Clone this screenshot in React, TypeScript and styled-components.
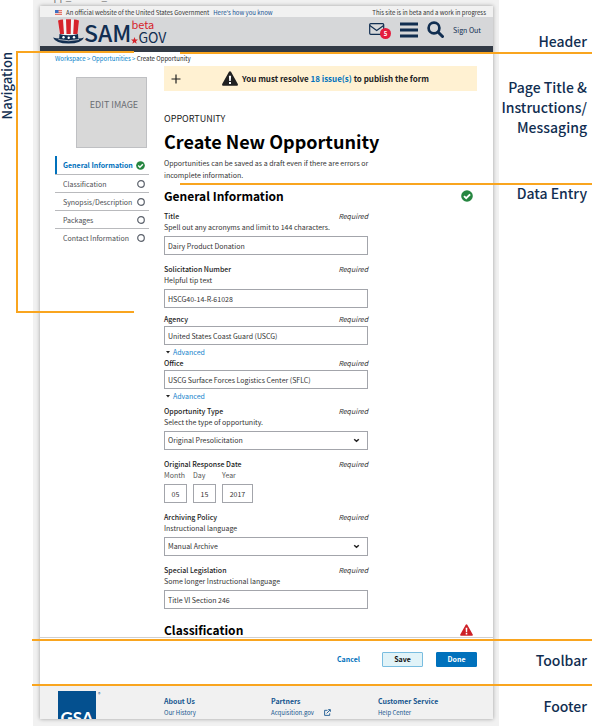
import React, { useId } from 'react';
import styled, { createGlobalStyle } from 'styled-components';

const NAVY = '#112e51';
const BLUE = '#0071bc';
const ORANGE = '#f9a51f';

const GlobalStyle = createGlobalStyle`
  *, *::before, *::after { box-sizing: border-box; }
  body { margin: 0; background: #fff; }
  body, button, input, select {
    font-family: "Noto Sans CJK SC", "Noto Sans", sans-serif;
  }
  h1, h2, h3, p, ul { margin: 0; padding: 0; }
  ul { list-style: none; }
  a { color: inherit; text-decoration: none; }
`;

/* Board with callouts */
const Board = styled.div`
  position: relative;
  display: grid;
  grid-template-columns: 33px minmax(0, 1fr) 93px;
  min-height: 100vh;
  overflow: hidden;
`;
const SideNote = styled.div`
  padding-top: 52px;
  display: flex;
  align-items: flex-start;
  span {
    writing-mode: vertical-rl;
    transform: rotate(180deg);
    font-size: 13px;
    line-height: 14px;
    font-weight: 500;
    color: ${NAVY};
  }
`;
const Notes = styled.div`
  display: flex;
  flex-direction: column;
  align-items: flex-end;
  padding-right: 5px;
  text-align: right;
  color: ${NAVY};
  font-size: 14px;
  font-weight: 500;
  line-height: 20px;
  white-space: nowrap;
`;
const Note = styled.p<{ $gap: number }>`
  margin-top: ${p => p.$gap}px;
`;
const Rule = styled.div<{ $top: number; $left: number }>`
  position: absolute;
  top: ${p => p.$top}px;
  left: ${p => p.$left}px;
  right: 0;
  height: 2px;
  background: ${ORANGE};
`;
const Bracket = styled.div`
  position: absolute;
  top: 51px;
  left: 16px;
  width: 118px;
  height: 262px;
  border: 2px solid ${ORANGE};
  border-right: 0;
  pointer-events: none;
`;

/* Page */
const Canvas = styled.div`
  position: relative;
  background: #f1f1f1;
  padding: 6px 6px 6px 7px;
`;
const FileName = styled.span`
  position: absolute;
  top: -9px;
  left: 13px;
  font-size: 10px;
  line-height: 10px;
  color: #777;
`;
const Page = styled.div`
  background: #fff;
  box-shadow: 0 0 4px rgba(0, 0, 0, 0.35);
`;
const Banner = styled.div`
  display: flex;
  align-items: center;
  height: 11px;
  padding: 2px 7px 0 15px;
  gap: 4px;
  background: #f1f1f1;
  font-size: 6px;
  line-height: 9px;
  color: #333;
  white-space: nowrap;
  a { color: #205493; }
  svg { flex: none; }
`;
const BannerEnd = styled.span`
  margin-left: auto;
`;
const Header = styled.header`
  display: flex;
  align-items: center;
  height: 35px;
  padding: 0 12px 0 13px;
  background: #d6d7d9;
  border-bottom: 6px solid #323a45;
  color: ${NAVY};
`;
const Logo = styled.a`
  display: flex;
  align-items: center;
  color: ${NAVY};
`;
const LogoName = styled.span`
  font-size: 23px;
  line-height: 26px;
  font-weight: 500;
`;
const LogoStack = styled.span`
  display: flex;
  flex-direction: column;
`;
const LogoBeta = styled.span`
  font-size: 11px;
  line-height: 11px;
  color: #d6232b;
`;
const LogoGov = styled.span`
  display: flex;
  align-items: flex-end;
  font-size: 14px;
  line-height: 14px;
`;
const HeaderTools = styled.div`
  display: flex;
  align-items: center;
  margin-left: auto;
  padding-bottom: 4px;
`;
const IconButton = styled.button`
  position: relative;
  display: flex;
  padding: 0;
  margin-right: 9px;
  border: 0;
  background: none;
  color: ${NAVY};
`;
const Badge = styled.span`
  position: absolute;
  top: 6px;
  left: 11px;
  width: 11px;
  height: 11px;
  border-radius: 50%;
  background: #e31c3d;
  color: #fff;
  font-size: 6px;
  line-height: 11px;
  font-weight: 700;
  text-align: center;
`;
const SignOut = styled.a`
  font-size: 7px;
  line-height: 10px;
`;
const Crumbs = styled.nav`
  padding: 1px 15px 0;
  font-size: 6px;
  line-height: 11px;
  color: #212121;
  a { color: #0081c9; }
`;
const Body = styled.div`
  display: grid;
  grid-template-columns: 94px minmax(0, 1fr);
  column-gap: 15px;
  padding: 2px 16px 0 15px;
`;
const Sidebar = styled.aside`
  padding-top: 11px;
`;
const ImageButton = styled.button`
  display: block;
  width: 71px;
  height: 71px;
  margin: 0 2px 8px auto;
  padding: 0 0 15px 5px;
  border: 1px solid #bfc0c3;
  background: #d8d8d8;
  color: #6a6d73;
  font-size: 9px;
  line-height: 12px;
`;
const NavItem = styled.li<{ $active?: boolean }>`
  display: flex;
  align-items: center;
  justify-content: space-between;
  height: 18px;
  padding: 0 4px 0 ${p => (p.$active ? 6 : 8)}px;
  border-left: ${p => (p.$active ? `2px solid ${BLUE}` : '0')};
  color: ${p => (p.$active ? BLUE : '#4a4d52')};
  font-size: 7px;
  font-weight: ${p => (p.$active ? 700 : 400)};
  white-space: nowrap;
  & + & { border-top: 1px solid #b9babd; }
`;
const Main = styled.main`
  min-width: 0;
`;
const Alert = styled.div`
  display: flex;
  align-items: center;
  height: 25px;
  padding: 0 7px;
  background: #fff1d2;
  color: #212121;
  font-size: 8px;
  line-height: 12px;
  font-weight: 700;
  white-space: nowrap;
  a { color: ${BLUE}; }
`;
const PlusButton = styled.button`
  display: flex;
  padding: 0;
  border: 0;
  background: none;
`;
const AlertText = styled.p`
  display: flex;
  align-items: center;
  gap: 4px;
  margin: 0 auto;
`;
const Eyebrow = styled.p`
  margin-top: 22px;
  font-size: 9px;
  line-height: 12px;
  color: #212121;
`;
const Title = styled.h1`
  margin-top: 3px;
  font-size: 18px;
  line-height: 26px;
  color: #000;
  white-space: nowrap;
`;
const Intro = styled.p`
  max-width: 212px;
  margin-top: 3px;
  font-size: 7px;
  line-height: 12px;
  color: #333;
`;
const SectionHead = styled.div<{ $gap?: number }>`
  display: flex;
  align-items: center;
  justify-content: space-between;
  height: 15px;
  margin-top: ${p => p.$gap ?? 0}px;
  padding-right: 4px;
`;
const SectionTitle = styled.h2`
  font-size: 12px;
  line-height: 15px;
  color: #000;
`;
const Form = styled.form`
  max-width: 204px;
  margin: 8px 0 13px;
`;
const Field = styled.div<{ $gap?: number }>`
  margin-top: ${p => p.$gap ?? 9}px;
`;
const FieldHead = styled.div`
  display: flex;
  justify-content: space-between;
  font-size: 7px;
  line-height: 11px;
  color: #333;
  label, span { font-weight: 500; color: #1b1b1b; }
`;
const Hint = styled.p`
  font-size: 7px;
  line-height: 11px;
  color: #333;
`;
const Control = styled.div<{ $gap: number }>`
  position: relative;
  margin-top: ${p => p.$gap}px;
  svg {
    position: absolute;
    right: 8px;
    top: 7px;
    pointer-events: none;
  }
`;
const TextBox = styled.input`
  display: block;
  width: 100%;
  height: 19px;
  padding: 0 3px;
  border: 1px solid #a3a5ab;
  border-radius: 0;
  background: #fff;
  color: #333;
  font-size: 7px;
  line-height: 11px;
`;
const Select = styled(TextBox).attrs({ as: 'select' })`
  appearance: none;
`;
const DateRow = styled.div`
  display: flex;
  gap: 6px;
`;
const DatePart = styled.label<{ $width: number }>`
  width: ${p => p.$width}px;
  font-size: 7px;
  line-height: 11px;
  color: #555;
  white-space: nowrap;
  input { margin-top: 3px; text-align: center; }
`;
const Advanced = styled.button`
  display: flex;
  align-items: center;
  gap: 3px;
  margin-top: 2px;
  padding: 0 2px;
  border: 0;
  background: none;
  color: #1684cc;
  font-size: 7px;
  line-height: 11px;
`;
const Toolbar = styled.div`
  display: flex;
  align-items: center;
  justify-content: flex-end;
  gap: 13px;
  height: 47px;
  padding: 0 16px 3px;
  border-top: 1px solid #cfcfd0;
`;
const Action = styled.button<{ $kind: 'plain' | 'light' | 'solid' }>`
  width: 41px;
  height: 15px;
  padding: 0;
  border: 1px solid ${p => ({ plain: 'transparent', light: '#79bde0', solid: BLUE })[p.$kind]};
  border-radius: 1px;
  background: ${p => ({ plain: 'transparent', light: '#e1f3f8', solid: BLUE })[p.$kind]};
  color: ${p => ({ plain: BLUE, light: '#111', solid: '#fff' })[p.$kind]};
  font-size: 7px;
  line-height: 11px;
  font-weight: 700;
`;
const Footer = styled.footer`
  display: grid;
  grid-template-columns: 106px repeat(3, minmax(0, 1fr));
  height: 35px;
  padding: 7px 8px 0 18px;
  overflow: hidden;
  background: #f1f1f1;
  color: #16568f;
`;
const FooterMark = styled.div`
  display: flex;
  gap: 2px;
  align-items: flex-start;
  font-size: 5px;
  line-height: 5px;
`;
const GsaBox = styled.div`
  width: 38px;
  height: 38px;
  padding-top: 17px;
  background: #04508f;
  color: #fff;
  font-family: Lato, sans-serif;
  font-size: 17px;
  line-height: 20px;
  font-weight: 700;
  text-align: center;
`;
const FooterTitle = styled.h3`
  margin-top: 4px;
  font-size: 7px;
  line-height: 12px;
`;
const FooterLink = styled.a`
  display: flex;
  align-items: center;
  gap: 10px;
  font-size: 6px;
  line-height: 11px;
`;

const Hat = () => (
  <svg width="31" height="25" viewBox="0 0 31 25" aria-hidden="true">
    <path d="M5 1.500 Q15.500 -.5 26 1.500 L24.500 16 H7 Z" fill="#f3f3f4" />
    <path d="M5 1.500 Q7.500 .8 10 .6 L11 15 H7 Z M13 .3 H18 L17.700 15 H13.500 Z M21 .6 Q23.500 .8 26 1.500 L24.500 15 H20.200 Z" fill="#d6232b" />
    <path d="M6.500 15 Q15.500 17.500 25 15 L25.300 19.500 Q28.500 19.500 31 18.500 Q28.500 24.500 15.500 24.500 Q2.500 24.500 0 18.500 Q3 19.500 6.200 19.500 Z" fill={NAVY} />
    <path d="M5.500 20.500 Q15.500 23 26 20.500" fill="none" stroke="#d6d7d9" strokeWidth=".8" />
    <circle cx="10.500" cy="18.300" r="1.200" fill="#fff" />
    <circle cx="15.700" cy="18.700" r="1.200" fill="#fff" />
    <circle cx="21" cy="18.300" r="1.200" fill="#fff" />
  </svg>
);
const Star = () => (
  <svg width="7" height="7" viewBox="0 0 10 10" aria-hidden="true">
    <path d="M5 0 6.300 3.500 10 3.700 7.100 6 8.100 9.700 5 7.600 1.900 9.700 2.900 6 0 3.700 3.700 3.500Z" fill="#d6232b" />
  </svg>
);
const Flag = () => (
  <svg width="7" height="5" viewBox="0 0 7 5" aria-hidden="true">
    <path d="M0 0H7V5H0Z" fill="#f3c9c4" />
    <path d="M0 .5H7M0 2.500H7M0 4.500H7" stroke="#e2766c" />
    <path d="M0 0H3.500V3H0Z" fill="#3f6fc0" />
  </svg>
);
const Check = ({ size }: { size: number }) => (
  <svg width={size} height={size} viewBox="0 0 12 12" aria-label="Complete" role="img">
    <circle cx="6" cy="6" r="5.800" fill="#268640" />
    <path d="M3 6.100 5.200 8.200 9.100 4.300" fill="none" stroke="#fff" strokeWidth="1.900" />
  </svg>
);
const Ring = () => (
  <svg width="8" height="8" viewBox="0 0 8 8" aria-label="Not started" role="img">
    <circle cx="4" cy="4" r="3.300" fill="none" stroke="#5b616b" strokeWidth="1.200" />
  </svg>
);
const Warning = ({ width, color }: { width: number; color: string }) => (
  <svg width={width} height={width - 1} viewBox="0 0 16 15" aria-label="Warning" role="img">
    <path d="M8 .2Q8.700 .2 9 .8L15.800 13Q16.300 14.500 15 14.800H1Q-.3 14.500 .2 13L7 .8Q7.300 .2 8 .2Z" fill={color} />
    <path d="M6.900 4.800H9.100L8.800 10H7.200ZM7 11H9V13H7Z" fill="#fff" />
  </svg>
);
const Chevron = () => (
  <svg width="7" height="5" viewBox="0 0 7 5" aria-hidden="true">
    <path d="M1.200 1.200 3.500 3.300 5.800 1.200" fill="none" stroke="#212121" strokeWidth="1.500" />
  </svg>
);

const Head = ({ id, label }: { id?: string; label: string }) => (
  <FieldHead>
    {id ? <label htmlFor={id}>{label}</label> : <span>{label}</span>}
    <em>Required</em>
  </FieldHead>
);

type FormFieldProps = {
  label: string;
  hint?: string;
  value: string;
  gap?: number;
  select?: boolean;
  advanced?: boolean;
};
const FormField = ({ label, hint, value, gap, select, advanced }: FormFieldProps) => {
  const id = useId();
  return (
    <Field $gap={gap}>
      <Head id={id} label={label} />
      {hint && <Hint>{hint}</Hint>}
      <Control $gap={hint ? 3 : 1}>
        {select ? (
          <>
            <Select id={id} defaultValue={value}><option>{value}</option></Select>
            <Chevron />
          </>
        ) : (
          <TextBox id={id} defaultValue={value} />
        )}
      </Control>
      {advanced && (
        <Advanced type="button">
          <svg width="4" height="3" viewBox="0 0 4 3" aria-hidden="true"><path d="M0 0H4L2 2.500Z" fill="#212121" /></svg>
          Advanced
        </Advanced>
      )}
    </Field>
  );
};

const steps = ['General Information', 'Classification', 'Synopsis/Description', 'Packages', 'Contact Information'];
const dateParts = [
  { label: 'Month', value: '05', width: 23 },
  { label: 'Day', value: '15', width: 23 },
  { label: 'Year', value: '2017', width: 31 },
];

export default function App() {
  return (
    <>
      <GlobalStyle />
      <Board>
        <SideNote><span>Navigation</span></SideNote>
        <Canvas>
          <FileName>Opp_Create_1</FileName>
          <Page>
            <Banner>
              <Flag />
              <span>An official website of the United States Government</span>
              <a href="#about">Here's how you know</a>
              <BannerEnd>This site is in beta and a work in progress</BannerEnd>
            </Banner>
            <Header>
              <Logo href="#home">
                <Hat />
                <LogoName>SAM</LogoName>
                <LogoStack>
                  <LogoBeta>beta</LogoBeta>
                  <LogoGov><Star />GOV</LogoGov>
                </LogoStack>
              </Logo>
              <HeaderTools>
                <IconButton aria-label="Messages">
                  <svg width="22" height="16" viewBox="0 0 22 16">
                    <rect x=".7" y="1.700" width="14" height="10.600" rx="1" fill="none" stroke={NAVY} strokeWidth="1.200" />
                    <path d="M.8 3.500 7.700 8.500 14.600 3.500" fill="none" stroke={NAVY} strokeWidth="1.200" />
                  </svg>
                  <Badge>5</Badge>
                </IconButton>
                <IconButton aria-label="Menu">
                  <svg width="18" height="16" viewBox="0 0 18 16">
                    <path d="M0 2H18M0 8H18M0 14H18" stroke={NAVY} strokeWidth="2.800" />
                  </svg>
                </IconButton>
                <IconButton aria-label="Search">
                  <svg width="17" height="17" viewBox="0 0 17 17">
                    <circle cx="7" cy="7" r="5.400" fill="none" stroke={NAVY} strokeWidth="2.700" />
                    <path d="M11 11 15.500 15.500" stroke={NAVY} strokeWidth="3" strokeLinecap="round" />
                  </svg>
                </IconButton>
                <SignOut href="#signout">Sign Out</SignOut>
              </HeaderTools>
            </Header>
            <Crumbs>
              <a href="#workspace">Workspace &gt;</a> <a href="#opportunities">Opportunities &gt;</a> Create Opportunity
            </Crumbs>
            <Body>
              <Sidebar>
                <ImageButton>EDIT IMAGE</ImageButton>
                <ul>
                  {steps.map((step, i) => (
                    <NavItem key={step} $active={i === 0}>
                      <a href="#step">{step}</a>
                      {i === 0 ? <Check size={9} /> : <Ring />}
                    </NavItem>
                  ))}
                </ul>
              </Sidebar>
              <Main>
                <Alert>
                  <PlusButton aria-label="Expand">
                    <svg width="10" height="10" viewBox="0 0 10 10"><path d="M5 .5V9.500M.5 5H9.500" stroke="#212121" strokeWidth="1.200" /></svg>
                  </PlusButton>
                  <AlertText>
                    <Warning width={16} color="#212121" />
                    <span>You must resolve <a href="#issues">18 issue(s)</a> to publish the form</span>
                  </AlertText>
                </Alert>
                <Eyebrow>OPPORTUNITY</Eyebrow>
                <Title>Create New Opportunity</Title>
                <Intro>Opportunities can be saved as a draft even if there are errors or incomplete information.</Intro>
                <SectionHead $gap={7}>
                  <SectionTitle>General Information</SectionTitle>
                  <Check size={12} />
                </SectionHead>
                <Form>
                  <FormField gap={0} label="Title" hint="Spell out any acronyms and limit to 144 characters." value="Dairy Product Donation" />
                  <FormField label="Solicitation Number" hint="Helpful tip text" value="HSCG40-14-R-61028" />
                  <FormField gap={6} label="Agency" value="United States Coast Guard (USCG)" advanced />
                  <FormField gap={0} label="Office" value="USCG Surface Forces Logistics Center (SFLC)" advanced />
                  <FormField gap={4} label="Opportunity Type" hint="Select the type of opportunity." value="Original Presolicitation" select />
                  <Field>
                    <Head label="Original Response Date" />
                    <DateRow>
                      {dateParts.map(part => (
                        <DatePart key={part.label} $width={part.width}>
                          {part.label}
                          <TextBox defaultValue={part.value} />
                        </DatePart>
                      ))}
                    </DateRow>
                  </Field>
                  <FormField label="Archiving Policy" hint="Instructional language" value="Manual Archive" select />
                  <FormField label="Special Legislation" hint="Some longer Instructional language" value="Title VI Section 246" />
                </Form>
                <SectionHead>
                  <SectionTitle>Classification</SectionTitle>
                  <Warning width={13} color="#cd2026" />
                </SectionHead>
              </Main>
            </Body>
            <Toolbar>
              <Action $kind="plain">Cancel</Action>
              <Action $kind="light">Save</Action>
              <Action $kind="solid">Done</Action>
            </Toolbar>
            <Footer>
              <FooterMark><GsaBox>GSA</GsaBox>®</FooterMark>
              <div>
                <FooterTitle>About Us</FooterTitle>
                <FooterLink href="#history">Our History</FooterLink>
              </div>
              <div>
                <FooterTitle>Partners</FooterTitle>
                <FooterLink href="#acquisition">
                  Acquisition.gov
                  <svg width="7" height="7" viewBox="0 0 8 8" aria-hidden="true">
                    <path d="M4 1.500H.7V7.300H6.500V5M3 5 7 1M4.800 .7H7.300V3.200" fill="none" stroke="currentColor" strokeWidth="1" />
                  </svg>
                </FooterLink>
              </div>
              <div>
                <FooterTitle>Customer Service</FooterTitle>
                <FooterLink href="#help">Help Center</FooterLink>
              </div>
            </Footer>
          </Page>
        </Canvas>
        <Notes>
          <Note $gap={31}>Header</Note>
          <Note $gap={26}>Page Title &amp;<br />Instructions/<br />Messaging</Note>
          <Note $gap={46}>Data Entry</Note>
          <Note $gap={447}>Toolbar</Note>
          <Note $gap={26}>Footer</Note>
        </Notes>
        <Bracket />
        <Rule $top={52} $left={180} />
        <Rule $top={183} $left={180} />
        <Rule $top={639} $left={32} />
        <Rule $top={684} $left={32} />
      </Board>
    </>
  );
}
